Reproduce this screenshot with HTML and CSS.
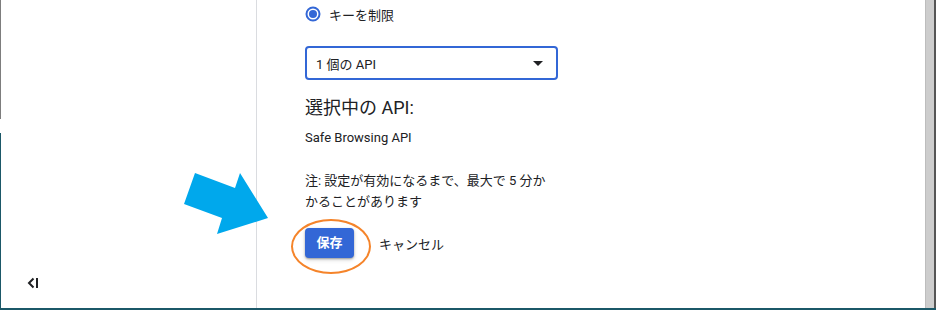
FILE: index.html
```html
<!DOCTYPE html>
<html lang="ja">
<head>
	<meta charset="UTF-8">
	<title>API キーの制限</title>
	<link rel="stylesheet" href="styles.css">
</head>
<body>
	<div class="window">
		<div class="edge"></div>
		<div class="sidebar">
			<a href="javascript:;" class="collapse">
				<svg width="12" height="12" viewBox="0 0 12 12">
					<path d="M6.5 1.5 L2 6 L6.5 10.5" fill="none" stroke="#202124" stroke-width="2"/>
					<rect x="9" y="1" width="2" height="10" fill="#202124"/>
				</svg>
			</a>
		</div>

		<div class="main">
			<label class="radio-row">
				<svg class="radio" width="16" height="16" viewBox="0 0 16 16">
					<circle cx="8" cy="8" r="6.5" fill="none" stroke="#3367d6" stroke-width="2"/>
					<circle cx="8" cy="8" r="4" fill="#3367d6"/>
				</svg>
				<span>キーを制限</span>
			</label>

			<div class="select">
				<span>1 個の API</span>
				<svg width="10" height="5" viewBox="0 0 10 5"><path d="M0 0 L5 5 L10 0z" fill="#202124"/></svg>
			</div>

			<h2 class="heading">選択中の API:</h2>
			<p class="api-name">Safe Browsing API</p>

			<p class="note">注: 設定が有効になるまで、最大で 5 分かかることがあります</p>

			<div class="actions">
				<a href="javascript:;" class="btn-save">保存</a>
				<a href="javascript:;" class="btn-cancel">キャンセル</a>
				<span class="ring"></span>
			</div>
		</div>

		<div class="scrollbar"></div>

		<svg class="arrow" width="90" height="66" viewBox="0 0 90 66">
			<polygon points="11,0 51,15 56,0 84,45 33,61 38,45 0,31" fill="#00a8ec"/>
		</svg>
	</div>
</body>
</html>
```

FILE: styles.css
```css
* {
    margin: 0;
    padding: 0;
    box-sizing: border-box;
    text-decoration: none;
}

body {
    width: 936px;
    height: 310px;
    overflow: hidden;
    background: #fff;
    font-family: Roboto, "Noto Sans CJK JP", sans-serif;
    color: #202124;
}

.window {
    position: relative;
    display: flex;
    height: 310px;
    border-bottom: 2px solid #1b5868;
}

.edge {
    width: 1px;
    flex-shrink: 0;
    background: linear-gradient(#7d7d7d 0 119px, #fff 119px 133px, #1b5868 133px);
}

.sidebar {
    display: flex;
    flex-direction: column;
    justify-content: flex-end;
    width: 256px;
    flex-shrink: 0;
    padding: 0 0 19px 26px;
    border-right: 1px solid #dadce0;
}

.collapse {
    display: block;
    width: 12px;
    height: 12px;
}

.collapse svg {
    display: block;
}

.main {
    flex: 1;
    padding: 4px 0 0 48px;
}

.radio-row {
    display: flex;
    align-items: center;
    height: 20px;
    font-size: 13px;
}

.radio {
    margin-right: 8px;
}

.select {
    display: flex;
    align-items: center;
    justify-content: space-between;
    width: 253px;
    height: 34px;
    margin-top: 22px;
    padding: 0 13px 0 9px;
    border: 2px solid #3367d6;
    border-radius: 4px;
    font-size: 13px;
}

.heading {
    margin-top: 16px;
    font-size: 18px;
    font-weight: normal;
    line-height: 24px;
}

.api-name {
    margin-top: 8px;
    font-size: 13px;
    line-height: 20px;
}

.note {
    width: 252px;
    margin-top: 22px;
    font-size: 13px;
    line-height: 21px;
}

.actions {
    position: relative;
    display: flex;
    align-items: center;
    margin-top: 16px;
}

.btn-save {
    display: block;
    width: 49px;
    height: 30px;
    border-radius: 4px;
    background: #3367d6;
    color: #fff;
    font-size: 13px;
    font-weight: bold;
    line-height: 30px;
    text-align: center;
    box-shadow: 0 1px 2px rgba(0, 0, 0, 0.3), 0 2px 4px rgba(0, 0, 0, 0.15);
}

.btn-cancel {
    margin-left: 25px;
    font-size: 13px;
    color: #202124;
}

.ring {
    position: absolute;
    left: -14px;
    top: -9px;
    width: 80px;
    height: 55px;
    border: 2px solid #f5842a;
    border-radius: 50%;
}

.scrollbar {
    width: 11px;
    flex-shrink: 0;
    border-left: 1px solid #bdbdbd;
    border-right: 2px solid #555;
    background: #cdcdcd;
}

.arrow {
    position: absolute;
    left: 184px;
    top: 173px;
}
```
